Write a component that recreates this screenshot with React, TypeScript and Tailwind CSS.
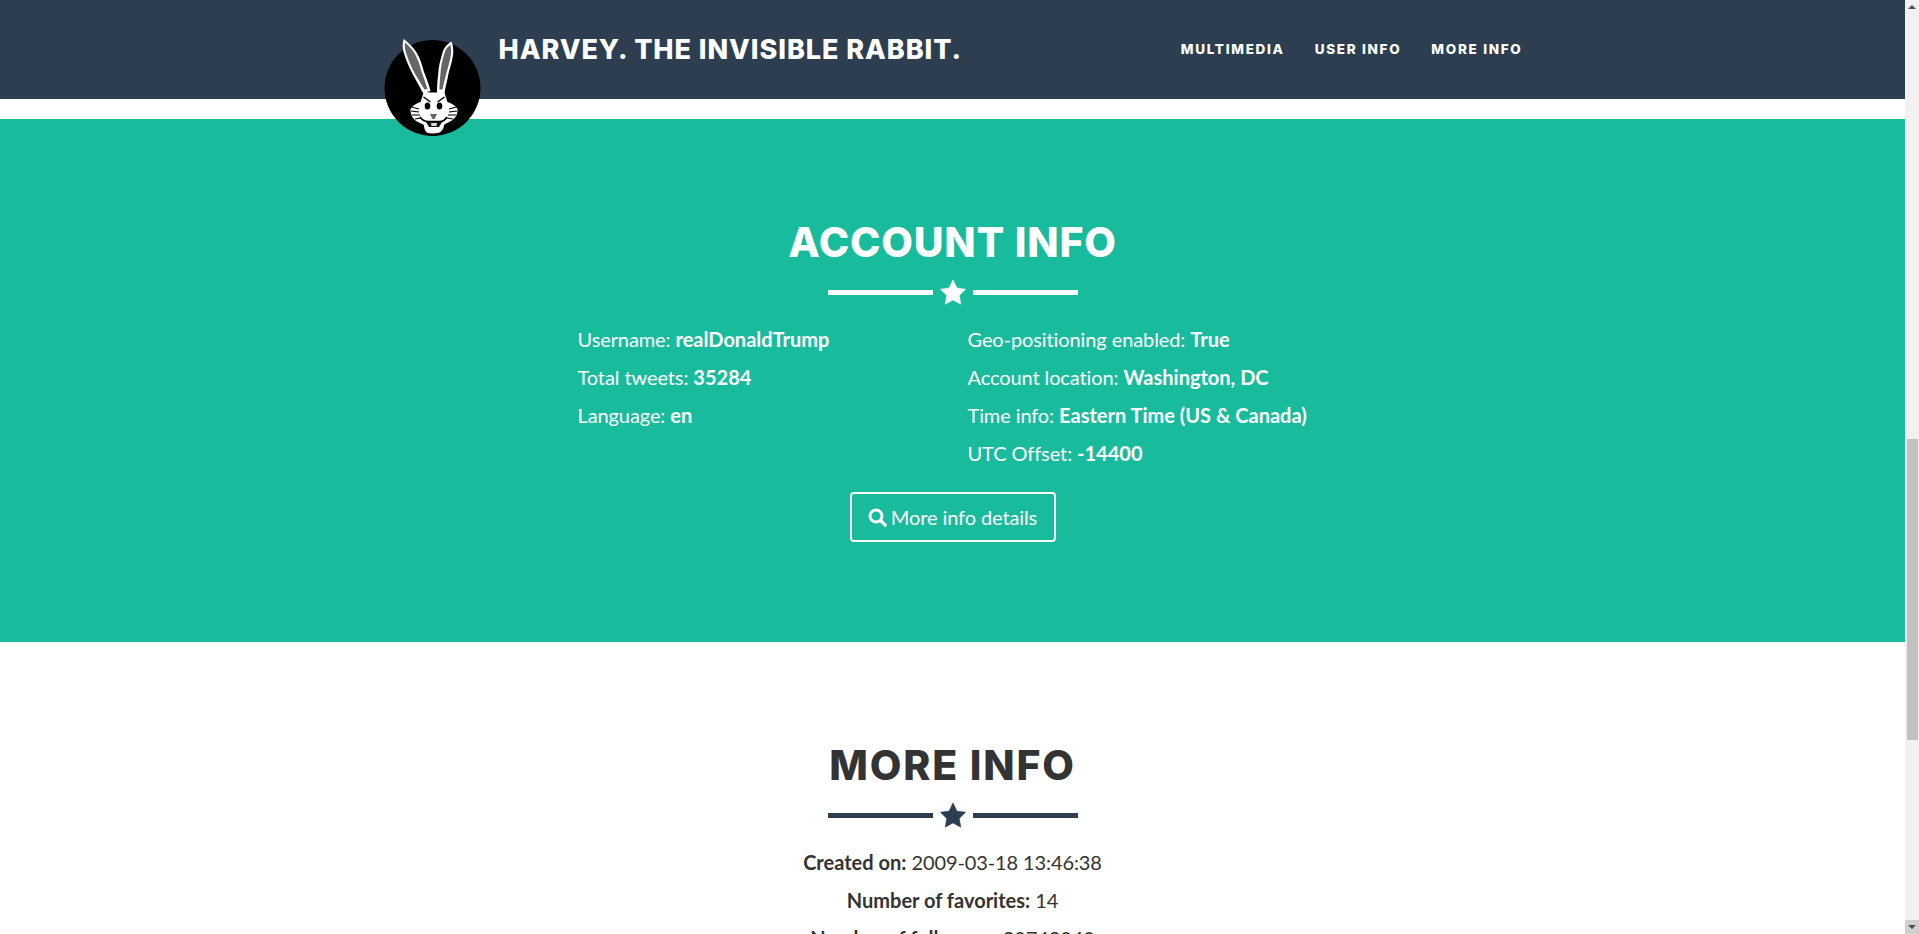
function Rabbit() {
  return (
    <svg viewBox="0 0 97 104" className="block w-[97px] h-[104px]">
      <circle cx="48.5" cy="55" r="48" fill="#000" />
      <path d="M19.5 6 C18 12 18.5 16 20 20.5 C22 27 25 34 28.3 40.5 L39 60 L46.5 58 C44.5 50 42 44 39.8 38.5 C38 31 36 26 33.2 20.5 C30 15 24 9 19.5 6 Z" fill="#fff" />
      <path d="M21 9.5 C20.5 14 21 17 22.5 21 C24.5 28 27.5 34 30.5 40 L40.5 56.5 L43.5 56 C41.5 50 39.5 44 37.5 38.5 C35.5 31 33.5 26 31 21 C28.5 16.5 24.5 12.5 21 9.5 Z" fill="#666" />
      <path d="M67.5 8.5 C63 11 59.5 15 58.3 20.5 C56 28 54.5 34 54.3 40.5 C53.5 47 53 53 53 60 L60.5 60 C61.5 53 63.5 47 64.5 40.5 C66.5 33 68.5 27 69.2 20.5 C69.7 15 68.5 11 67.5 8.5 Z" fill="#fff" />
      <path d="M66.3 12 C63 14 61.2 17 60.2 21 C58.2 28 56.7 34 56.5 40.5 C55.9 46 55.5 51 55.5 56.5 L58.5 56.5 C59.3 51 61.3 46 62.3 40.5 C64.3 33 66.3 27 67.1 20.5 C67.4 17 67 14 66.3 12 Z" fill="#666" />
      <path d="M40 58 C44 60 54 60 60 58 C61 61 62 65 63.5 69 C67 70 71 72 73.5 76 C74 81 71 87 65 89 C63 90 61 91 60 92 C60 95 58 99 54 100 C50 100.5 46 100.5 44 100 C41 99 40 95 40 92 C38 91 36 90 34 89 C29 87 26 81 26.5 76 C29 72 33 70 36.5 69 C38 65 39 61 40 58 Z" fill="#fff" />
      <path d="M27.5 74 L35 76 M27 78 L35 79 M28 82 L36 82 M31 86 L37 85 M72.5 74 L65 76 M73 78 L65 79 M72 82 L64 82 M69 86 L63 85" stroke="#000" strokeWidth="1.1" fill="none" />
      <ellipse cx="43.5" cy="73" rx="2.8" ry="3.6" fill="#000" />
      <ellipse cx="55.5" cy="73" rx="2.8" ry="3.6" fill="#000" />
      <path d="M39.5 64 L46.5 69 M60.5 64 L53.5 69" stroke="#000" strokeWidth="1.5" />
      <path d="M36 84 C39 88 43 89 46 88.5 L54 88.5 C57 89 60.5 88 63 84" stroke="#000" strokeWidth="1.6" fill="none" />
      <path d="M42 89 L58 89 L55 94 L45 94 Z" fill="#111" />
      <path d="M46 81 L53 81 L50.5 86 L48.5 86 Z" fill="#666" />
      <path d="M47 90 L53 90 L52.5 93 L47.5 93 Z" fill="#ddd" />
    </svg>
  );
}

function Star() {
  return (
    <svg viewBox="0 0 26 26" className="mx-[7px] w-[26px] h-[26px]" fill="currentColor">
      <path d="M13 .8 L16.9 9 L25.6 10.2 L19.3 16.4 L20.8 25.2 L13 21 L5.2 25.2 L6.7 16.4 L.4 10.2 L9.1 9 Z" stroke="currentColor" strokeWidth=".5" strokeLinejoin="round" />
    </svg>
  );
}

function SearchIcon() {
  return (
    <svg viewBox="0 0 19 19" className="w-[19px] h-[19px]" fill="none" stroke="currentColor">
      <circle cx="8" cy="8" r="6" strokeWidth="3" />
      <path d="M12.5 12.5 L17.2 17.2" strokeWidth="3.2" strokeLinecap="round" />
    </svg>
  );
}

function Divider({ light }: { light: boolean }) {
  return (
    <div className={light ? "flex items-center justify-center text-white h-[28px]" : "flex items-center justify-center text-[#2c3e50] h-[28px]"}>
      <div className={light ? "w-[105px] h-[5px] bg-white" : "w-[105px] h-[5px] bg-[#2c3e50]"} />
      <Star />
      <div className={light ? "w-[105px] h-[5px] bg-white" : "w-[105px] h-[5px] bg-[#2c3e50]"} />
    </div>
  );
}

function Row({ label, value }: { label: string; value: string }) {
  return (
    <p className="mb-[10px] leading-[28px] tracking-[-0.1px]">
      {label} <b className="font-bold tracking-normal">{value}</b>
    </p>
  );
}

export default function App() {
  return (
    <div className="flex h-[934px] w-full overflow-hidden bg-white font-['Lato',sans-serif] text-[20px]">
      <div className="flex-1 min-w-0">
        <header className="h-[99px] bg-[#2c3e50] relative z-10 text-white">
          <div className="w-[1170px] mx-auto pl-[16px] pr-[15px] flex items-start">
            <div className="mt-[33px]"><Rabbit /></div>
            <div className="ml-[18px] mt-[32px] font-['Inter',sans-serif] font-extrabold text-[27px] leading-[36px] tracking-[0.95px]">HARVEY. THE INVISIBLE RABBIT.</div>
            <nav className="ml-auto mt-[39px] flex gap-[30px] font-['Inter',sans-serif] font-extrabold text-[13.5px] leading-[20px] tracking-[1.7px]">
              <span>MULTIMEDIA</span>
              <span>USER INFO</span>
              <span>MORE INFO</span>
            </nav>
          </div>
        </header>
        <div className="h-[20px]" />
        <section className="h-[523px] bg-[#18bc9c] text-white pt-[100px]">
          <h2 className="text-center font-['Inter',sans-serif] font-extrabold text-[41px] leading-[46px] tracking-[0.8px]">ACCOUNT INFO</h2>
          <div className="mt-[13px]"><Divider light /></div>
          <div className="w-[780px] mx-auto mt-[19px] flex px-[15px] text-[20px]">
            <div className="w-[390px]">
              <Row label="Username:" value="realDonaldTrump" />
              <Row label="Total tweets:" value="35284" />
              <Row label="Language:" value="en" />
            </div>
            <div>
              <Row label="Geo-positioning enabled:" value="True" />
              <Row label="Account location:" value="Washington, DC" />
              <Row label="Time info:" value="Eastern Time (US & Canada)" />
              <Row label="UTC Offset:" value="-14400" />
            </div>
          </div>
          <div className="flex justify-center mt-[15px]">
            <button className="h-[50px] w-[206px] border-2 border-white rounded-[4px] flex items-center justify-center gap-[4px] text-[20px] tracking-[-0.1px]">
              <SearchIcon />
              More info details
            </button>
          </div>
        </section>
        <section className="text-[#333] pt-[100px] text-center">
          <h2 className="font-['Inter',sans-serif] font-extrabold text-[41px] leading-[46px] tracking-[1.8px]">MORE INFO</h2>
          <div className="mt-[13px]"><Divider light={false} /></div>
          <div className="mt-[19px] tracking-[-0.1px]">
            <p className="mb-[10px] leading-[28px]"><b className="tracking-normal">Created on:</b> 2009-03-18 13:46:38</p>
            <p className="mb-[10px] leading-[28px]"><b className="tracking-normal">Number of favorites:</b> 14</p>
            <p className="mb-[10px] leading-[28px]"><b className="tracking-normal">Number of followers:</b> 30743040</p>
          </div>
        </section>
      </div>
      <div className="w-[14px] shrink-0 bg-[#f1f1f1] flex flex-col items-center">
        <div className="h-[14px] w-full flex items-center justify-center">
          <div className="w-0 h-0 border-x-[4px] border-x-transparent border-b-[4px] border-b-[#505050]" />
        </div>
        <div className="mt-[425px] h-[301px] w-[11px] ml-[1px] bg-[#c1c1c1]" />
        <div className="mt-auto h-[14px] w-full bg-[#d0d0d0] flex items-center justify-center">
          <div className="w-0 h-0 border-x-[4px] border-x-transparent border-t-[4px] border-t-[#505050]" />
        </div>
      </div>
    </div>
  );
}
